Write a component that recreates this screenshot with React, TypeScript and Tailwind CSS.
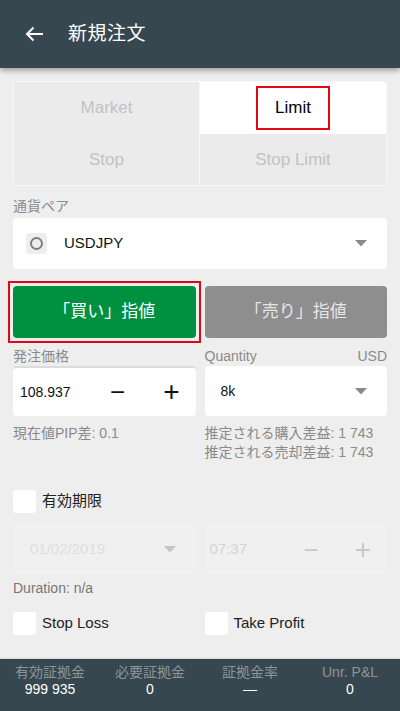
const font = { fontFamily: '"Liberation Sans", "Noto Sans CJK JP", sans-serif' };

const Caret = ({ light }: { light?: boolean }) => (
  <svg width="12" height="7" viewBox="0 0 12 7">
    <path d="M0 0 L12 0 L6 6.5 Z" fill={light ? "#c4c4c4" : "#8a8a8a"} />
  </svg>
);

const Check = ({ label }: { label: string }) => (
  <div className="flex items-center gap-[6px]">
    <div className="w-[23px] h-[23px] bg-white rounded-[3px]" />
    <span className="text-[15px] text-[#222]">{label}</span>
  </div>
);

const App = () => {
  return (
    <div className="w-[400px] h-[711px] bg-[#eeeeee] flex flex-col overflow-hidden" style={font}>
      <header className="h-[68px] bg-[#37474f] flex items-center shadow-[0_3px_5px_rgba(0,0,0,0.3)] z-10 shrink-0">
        <svg className="ml-[25px]" width="19" height="16" viewBox="0 0 19 16">
          <path d="M18 8 H2 M8.5 1.5 L2 8 L8.5 14.5" stroke="white" strokeWidth="2" fill="none" />
        </svg>
        <h1 className="ml-[24px] text-white text-[19px] tracking-wide">新規注文</h1>
      </header>

      <main className="flex-1 px-[13px]">
        <div className="mt-[13px] grid grid-cols-2 rounded-[4px] border border-[#f8f8f8] overflow-hidden text-[17px]">
          <div className="h-[52px] bg-[#ebebeb] flex items-center justify-center text-[#c2c2c2] border-r border-[#f8f8f8]">Market</div>
          <div className="h-[52px] bg-white flex items-center justify-center">
            <span className="border-2 border-[#e30613] px-[17px] py-[7px] text-black">Limit</span>
          </div>
          <div className="h-[51px] bg-[#ebebeb] flex items-center justify-center text-[#c2c2c2] border-r border-[#f8f8f8]">Stop</div>
          <div className="h-[51px] bg-[#ebebeb] flex items-center justify-center text-[#c2c2c2]">Stop Limit</div>
        </div>

        <div className="mt-[11px] text-[14px] text-[#8a8a8a] leading-[18px]">通貨ペア</div>
        <div className="mt-[3px] h-[51px] bg-white rounded-[4px] flex items-center pl-[13px] pr-[20px]">
          <div className="w-[21px] h-[21px] bg-[#eeeeee] rounded-[3px] flex items-center justify-center">
            <div className="w-[13px] h-[13px] rounded-full border-2 border-[#808080]" />
          </div>
          <span className="ml-[17px] text-[15px] text-[#111] flex-1">USDJPY</span>
          <Caret />
        </div>

        <div className="mt-[17px] grid grid-cols-2 gap-[9px]">
          <div className="relative">
            <div className="absolute -inset-[5px] border-2 border-[#e30613]" />
            <div className="h-[52px] bg-[#009140] rounded-[4px] flex items-center justify-center text-white text-[17px]">「買い」指値</div>
          </div>
          <div className="h-[52px] bg-[#8e8e8e] rounded-[4px] flex items-center justify-center text-[#e6e6e6] text-[17px]">「売り」指値</div>
        </div>

        <div className="mt-[9px] grid grid-cols-2 gap-[9px] text-[14px] text-[#8a8a8a] leading-[18px]">
          <div>発注価格</div>
          <div className="flex justify-between"><span>Quantity</span><span>USD</span></div>
        </div>
        <div className="mt-[1px] grid grid-cols-2 gap-[9px]">
          <div className="h-[50px] bg-white rounded-[4px] border-t-2 border-[#dcdcdc] flex items-center pl-[7px] pr-[16px] text-[14px] text-[#111]">
            <span className="flex-1">108.937</span>
            <span className="text-[26px] font-light leading-none mr-[38px]">−</span>
            <span className="text-[28px] font-light leading-none">+</span>
          </div>
          <div className="h-[50px] bg-white rounded-[4px] flex items-center pl-[16px] pr-[20px] text-[14px] text-[#111]">
            <span className="flex-1">8k</span>
            <Caret />
          </div>
        </div>

        <div className="mt-[8px] grid grid-cols-2 gap-[9px] text-[14px] text-[#8a8a8a] leading-[19px]">
          <div>現在値PIP差: 0.1</div>
          <div>
            <div>推定される購入差益: 1 743</div>
            <div>推定される売却差益: 1 743</div>
          </div>
        </div>

        <div className="mt-[28px]">
          <Check label="有効期限" />
        </div>

        <div className="mt-[11px] grid grid-cols-2 gap-[9px]">
          <div className="h-[51px] bg-[#f0f0f0] rounded-[4px] flex items-center pl-[17px] pr-[20px] text-[15px] text-[#dedede]">
            <span className="flex-1">01/02/2019</span>
            <Caret light />
          </div>
          <div className="h-[51px] bg-[#f0f0f0] rounded-[4px] flex items-center pl-[5px] pr-[16px] text-[15px] text-[#d4d4d4]">
            <span className="flex-1">07:37</span>
            <span className="text-[26px] font-light leading-none mr-[36px] text-[#c8c8c8]">−</span>
            <span className="text-[28px] font-light leading-none text-[#c8c8c8]">+</span>
          </div>
        </div>

        <div className="mt-[4px] text-[14px] text-[#777] leading-[18px]">Duration: n/a</div>

        <div className="mt-[15px] grid grid-cols-2 gap-[9px]">
          <Check label="Stop Loss" />
          <Check label="Take Profit" />
        </div>
      </main>

      <footer className="h-[53px] bg-[#37474f] border-t border-[#d8d8d8] grid grid-cols-4 text-center pt-[5px] shrink-0">
        {[
          ["有効証拠金", "999 935"],
          ["必要証拠金", "0"],
          ["証拠金率", "—"],
          ["Unr. P&L", "0"],
        ].map(([k, v]) => (
          <div key={k} className="flex flex-col">
            <span className="text-[14px] text-[#8e9599] leading-[17px]">{k}</span>
            <span className="text-[14px] text-white leading-[17px]">{v}</span>
          </div>
        ))}
      </footer>
    </div>
  );
};

export default App;
